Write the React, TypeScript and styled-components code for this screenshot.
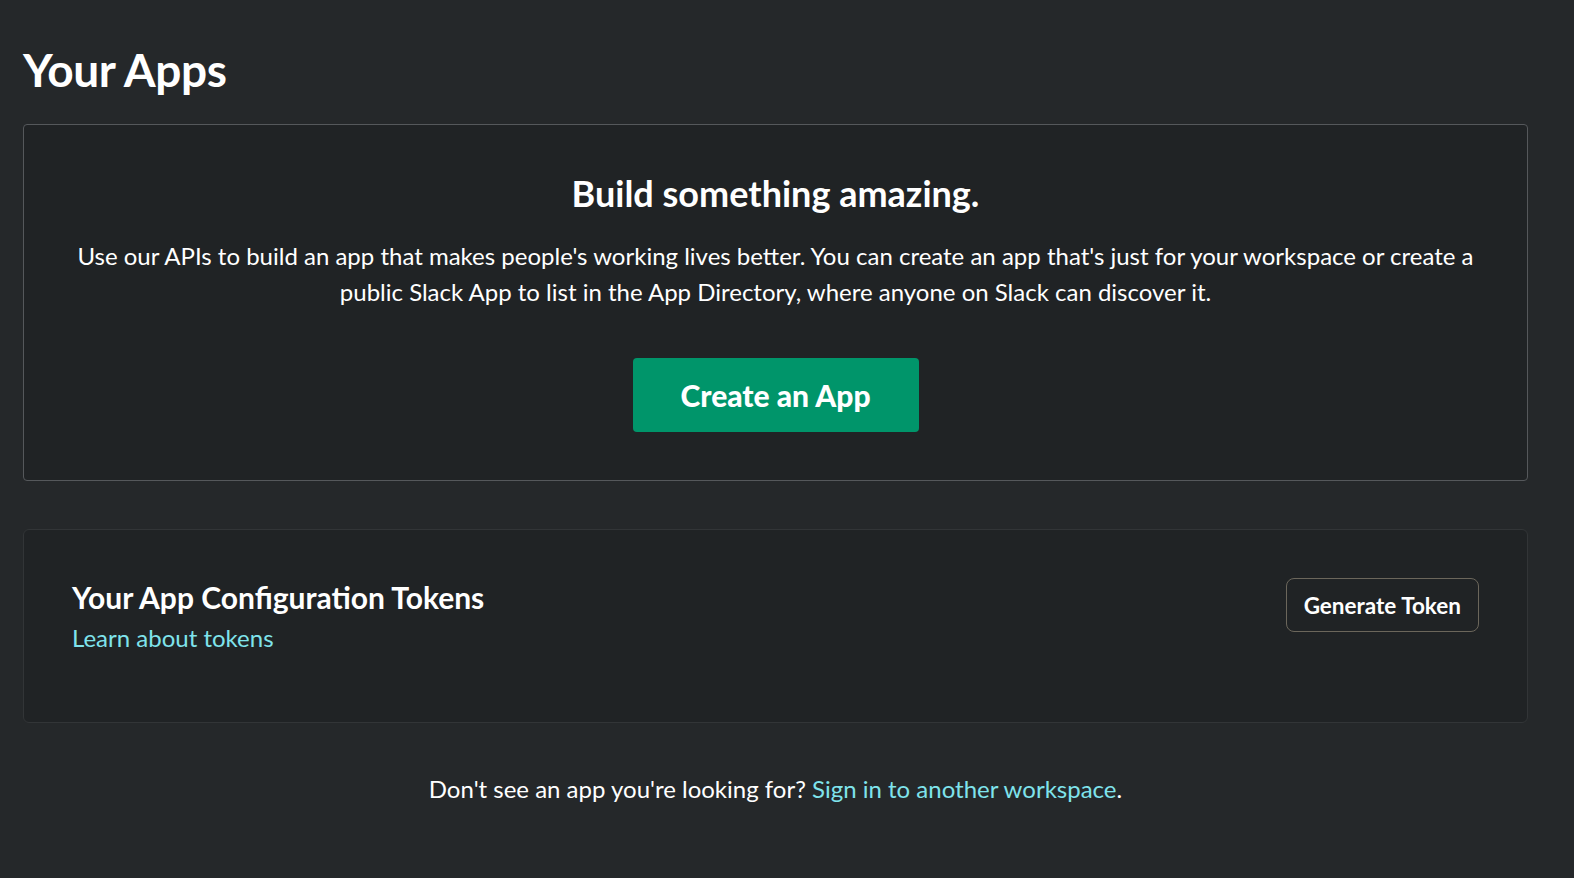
import styled, { createGlobalStyle } from 'styled-components';

const GlobalStyle = createGlobalStyle`
  body {
    margin: 0;
    background: #25282a;
    font-family: Lato, "Noto Sans", sans-serif;
    color: #ffffff;
  }
`;

const Page = styled.div`
  padding: 38px 46px 60px 23px;
  min-height: 100vh;
  box-sizing: border-box;
`;

const PageTitle = styled.h1`
  margin: 0 0 22px 0;
  font-size: 46px;
  font-weight: 700;
  line-height: 64px;
  letter-spacing: -0.4px;
`;

const HeroCard = styled.section`
  border: 1px solid #55585b;
  border-radius: 4px;
  background: #202325;
  padding: 46px 40px 48px;
  display: flex;
  flex-direction: column;
  align-items: center;
  text-align: center;
`;

const HeroTitle = styled.h2`
  margin: 0 0 23px 0;
  font-size: 36px;
  font-weight: 700;
  line-height: 44px;
`;

const HeroText = styled.p`
  margin: 0 0 48px 0;
  font-size: 24px;
  line-height: 36px;
`;

const PrimaryButton = styled.button`
  width: 286px;
  height: 74px;
  border: none;
  border-radius: 4px;
  background: #00956a;
  color: #ffffff;
  font-family: Lato, "Noto Sans", sans-serif;
  font-size: 30px;
  font-weight: 900;
  cursor: pointer;
`;

const TokenCard = styled.section`
  margin-top: 48px;
  border: 1px solid #323537;
  border-radius: 6px;
  background: #202325;
  padding: 48px 48px 67px;
  display: flex;
  justify-content: space-between;
  align-items: flex-start;
`;

const TokenInfo = styled.div`
  display: flex;
  flex-direction: column;
`;

const TokenTitle = styled.h3`
  margin: -1px 0 4px 0;
  font-size: 30px;
  font-weight: 700;
  line-height: 40px;
`;

const Link = styled.a`
  color: #7fe3ec;
  text-decoration: none;
  cursor: pointer;
`;

const TokenLink = styled(Link)`
  font-size: 24px;
  line-height: 34px;
`;

const OutlineButton = styled.button`
  height: 54px;
  padding: 0 17px;
  border: 1px solid #6b665b;
  border-radius: 8px;
  background: transparent;
  color: #ffffff;
  font-family: Lato, "Noto Sans", sans-serif;
  font-size: 22.5px;
  font-weight: 700;
  cursor: pointer;
`;

const FooterNote = styled.p`
  margin: 49px 0 0 0;
  text-align: center;
  font-size: 24px;
  line-height: 34px;
`;

export default function App() {
  return (
    <>
      <GlobalStyle />
      <Page>
        <PageTitle>Your Apps</PageTitle>
        <HeroCard>
          <HeroTitle>Build something amazing.</HeroTitle>
          <HeroText>
            Use our APIs to build an app that makes people's working lives better. You can create an app that's just for
            your workspace or create a public Slack App to list in the App Directory, where anyone on Slack can discover it.
          </HeroText>
          <PrimaryButton>Create an App</PrimaryButton>
        </HeroCard>
        <TokenCard>
          <TokenInfo>
            <TokenTitle>Your App Configuration Tokens</TokenTitle>
            <TokenLink>Learn about tokens</TokenLink>
          </TokenInfo>
          <OutlineButton>Generate Token</OutlineButton>
        </TokenCard>
        <FooterNote>
          Don't see an app you're looking for? <Link>Sign in to another workspace</Link>.
        </FooterNote>
      </Page>
    </>
  );
}
